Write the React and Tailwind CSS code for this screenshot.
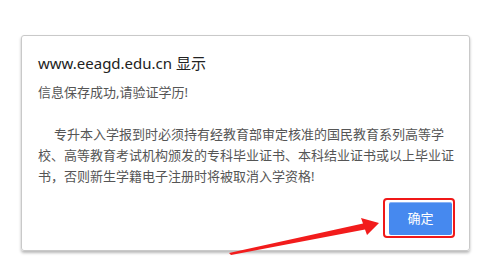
const font = { fontFamily: '"Noto Sans", "Noto Sans CJK SC", sans-serif' };

const Arrow = () => (
  <svg
    className="absolute left-0 top-0 pointer-events-none"
    width="485"
    height="277"
    viewBox="0 0 485 277"
  >
    <polygon
      points="229,253 363,223.5 361,218 379,223 367,235 365,229.5 231,255"
      fill="#f21c1c"
    />
  </svg>
);

export default function App() {
  return (
    <div
      className="relative w-[485px] h-[277px] bg-white overflow-hidden pt-[35px] pl-[21px]"
      style={font}
    >
      <div className="w-[449px] h-[216px] rounded-[3px] border border-[#c9c9c9] shadow-[0_2px_3px_rgba(0,0,0,0.28)] pl-4 pr-[14px] flex flex-col">
        <h1 className="pt-[17px] text-[15px] leading-[20px] text-[#222]">
          www.eeagd.edu.cn 显示
        </h1>
        <p className="mt-[11px] text-[13px] leading-[16px] text-[#555]">
          信息保存成功,请验证学历!
        </p>
        <p className="mt-[24px] w-[417px] text-[13px] leading-[21px] indent-[16px] text-[#555]">
          专升本入学报到时必须持有经教育部审定核准的国民教育系列高等学校、高等教育考试机构颁发的专科毕业证书、本科结业证书或以上毕业证书，否则新生学籍电子注册时将被取消入学资格!
        </p>
        <div className="mt-auto mb-[12px] flex justify-end">
          <div className="rounded-[4px] border-2 border-[#f01818] pl-[4px] pr-[1px] pt-[2px] pb-[1px]">
            <button className="w-[63px] h-[33px] rounded-[2px] bg-[#4689ef] border-t border-[#8ab3f5] text-[13px] text-white">
              确定
            </button>
          </div>
        </div>
      </div>
      <Arrow />
    </div>
  );
}
